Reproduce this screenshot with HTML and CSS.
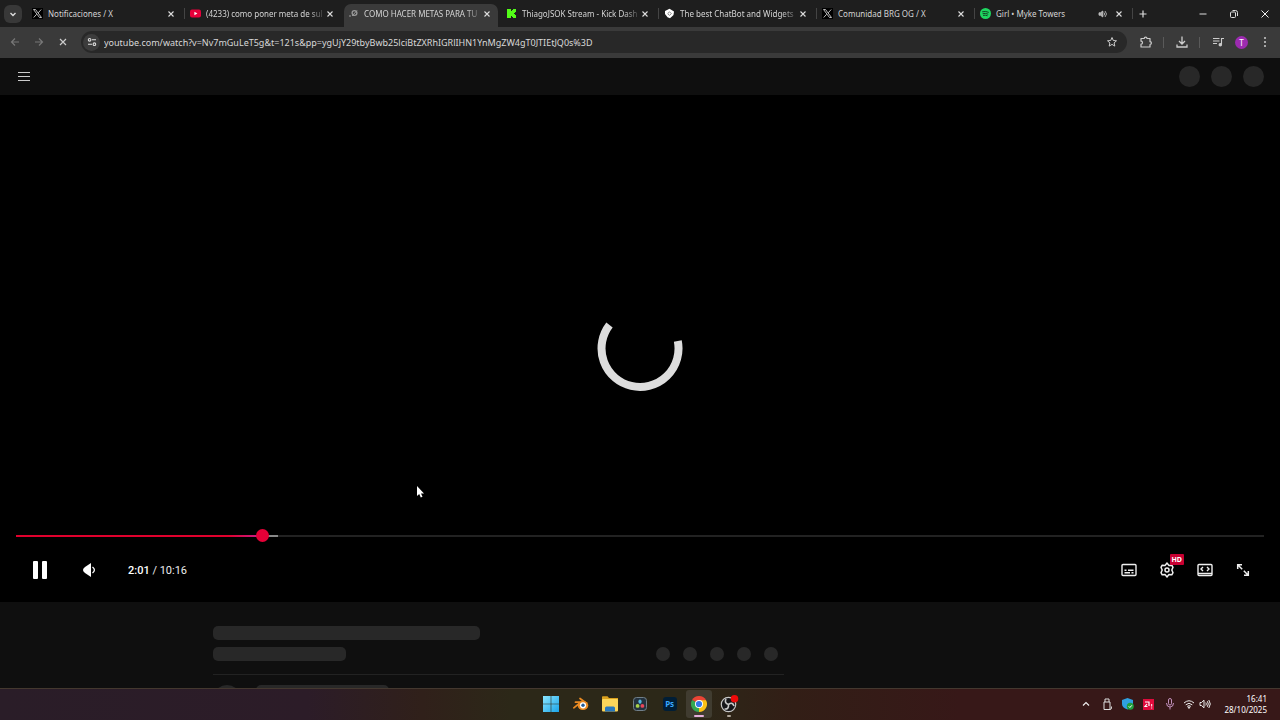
FILE: index.html
```html
<!DOCTYPE html>
<html lang="es">
<head>
    <meta charset="UTF-8">
    <meta name="viewport" content="width=device-width, initial-scale=1.0">
    <title>YouTube</title>
    <link rel="stylesheet" href="styles.css">
</head>
<body>
    <!-- shared icons -->
    <svg class="sprite" aria-hidden="true">
        <symbol id="close" viewBox="0 0 10 10"><path d="M2.5 2.5l5 5M7.5 2.5l-5 5" fill="none" stroke="currentColor" stroke-width="1.1"/></symbol>
        <symbol id="x-logo" viewBox="0 0 11 11"><path d="M0 0h11v11H0z" fill="#000"/><path d="M1.5 1.5h2l6 8h-2zM9.2 1.5L6.2 4.9M4.7 6.2L1.7 9.5" fill="none" stroke="#ccc" stroke-width=".9"/></symbol>
    </svg>

    <header class="browser">
        <div class="tab-strip">
            <button class="tab-search" aria-label="Buscar pestañas">
                <svg width="10" height="10" viewBox="0 0 10 10"><path d="M2.5 4L5 6.5 7.5 4" fill="none" stroke="#ddd" stroke-width="1.4"/></svg>
            </button>
            <nav class="tabs">
                <div class="tab">
                    <svg class="favicon" viewBox="0 0 11 11"><use href="#x-logo"/></svg>
                    <a href="#" class="tab-title">Notificaciones / X</a>
                    <button class="tab-close" aria-label="Cerrar"><svg><use href="#close"/></svg></button>
                </div>
                <div class="tab no-line">
                    <svg class="favicon" viewBox="0 0 11 11"><rect y="1.5" width="11" height="8" rx="2" fill="#e6003a"/><path d="M4.4 3.8v3.4l3-1.7z" fill="#fff"/></svg>
                    <a href="#" class="tab-title fade">(4233) como poner meta de sul</a>
                    <button class="tab-close" aria-label="Cerrar"><svg><use href="#close"/></svg></button>
                </div>
                <div class="tab active no-line">
                    <svg class="favicon" viewBox="0 0 11 11"><g fill="none" stroke="#999"><circle cx="6.5" cy="5" r="2.4" stroke-width="1.3"/><path d="M4 8l5-5.5"/></g><circle cx="2" cy="8" r=".8" fill="#aaa"/></svg>
                    <a href="#" class="tab-title fade">COMO HACER METAS PARA TU</a>
                    <button class="tab-close" aria-label="Cerrar"><svg><use href="#close"/></svg></button>
                </div>
                <div class="tab">
                    <svg class="favicon" viewBox="0 0 11 11"><path d="M1 1h4v2h1V2h1V1h3v3H9v1H8v1h1v1h1v3H7V9H6V8H5v2H1z" fill="#53fc18"/></svg>
                    <a href="#" class="tab-title fade">ThiagoJSOK Stream - Kick Dash</a>
                    <button class="tab-close" aria-label="Cerrar"><svg><use href="#close"/></svg></button>
                </div>
                <div class="tab">
                    <svg class="favicon" viewBox="0 0 11 11"><path d="M5.5 .8L10 3.5 9.5 7 6 10.3 3.5 9.2 1 6V3z" fill="#fff"/><path d="M5.5 3.8l1.8 1.8-1.8 1.8-1.8-1.8z" fill="none" stroke="#555" stroke-width=".7"/></svg>
                    <a href="#" class="tab-title fade">The best ChatBot and Widgets</a>
                    <button class="tab-close" aria-label="Cerrar"><svg><use href="#close"/></svg></button>
                </div>
                <div class="tab">
                    <svg class="favicon" viewBox="0 0 11 11"><use href="#x-logo"/></svg>
                    <a href="#" class="tab-title">Comunidad BRG OG / X</a>
                    <button class="tab-close" aria-label="Cerrar"><svg><use href="#close"/></svg></button>
                </div>
                <div class="tab">
                    <svg class="favicon" viewBox="0 0 11 11"><circle cx="5.5" cy="5.5" r="5.5" fill="#1ed760"/><path d="M2.2 3.8q3.5-1 6.6.6M2.6 5.7q3-.8 5.6.5M3 7.4q2.5-.6 4.6.4" fill="none" stroke="#12351f" stroke-width=".9"/></svg>
                    <a href="#" class="tab-title">Girl • Myke Towers</a>
                    <button class="tab-sound" aria-label="Silenciar">
                        <svg width="10" height="10" viewBox="0 0 10 10" fill="none" stroke="#ccc" stroke-width=".8"><path d="M1 3.8h1.5L4.8 2v6L2.5 6.2H1z" fill="#aaa"/><path d="M6 3.5q1.4 1.5 0 3M7 2q3 3 0 6"/></svg>
                    </button>
                    <button class="tab-close" aria-label="Cerrar"><svg><use href="#close"/></svg></button>
                </div>
            </nav>
            <button class="new-tab" aria-label="Nueva pestaña">
                <svg width="10" height="10" viewBox="0 0 10 10"><path d="M5 1.5v7M1.5 5h7" stroke="#ddd" stroke-width="1.2"/></svg>
            </button>
            <div class="window-buttons">
                <button aria-label="Minimizar"><svg width="10" height="10" viewBox="0 0 10 10"><path d="M1.5 5h7" stroke="#ddd"/></svg></button>
                <button aria-label="Restaurar"><svg width="10" height="10" viewBox="0 0 10 10" fill="none" stroke="#ddd"><rect x="1.5" y="3" width="5" height="5.5" rx="1"/><path d="M3.5 1.5h3q2 0 2 2v3.5"/></svg></button>
                <button aria-label="Cerrar ventana"><svg width="10" height="10" viewBox="0 0 10 10"><path d="M1.5 1.5l7 7M8.5 1.5l-7 7" stroke="#eee"/></svg></button>
            </div>
        </div>

        <div class="toolbar">
            <div class="nav-buttons">
                <button aria-label="Atrás"><svg width="12" height="12" viewBox="0 0 12 12" fill="none" stroke="#777" stroke-width="1.2"><path d="M10 6H2.5M6 2.5L2.5 6 6 9.5"/></svg></button>
                <button aria-label="Adelante"><svg width="12" height="12" viewBox="0 0 12 12" fill="none" stroke="#777" stroke-width="1.2"><path d="M2 6h7.5M6 2.5L9.5 6 6 9.5"/></svg></button>
                <button aria-label="Detener"><svg width="12" height="12" viewBox="0 0 12 12" fill="none" stroke="#ccc" stroke-width="1.2"><path d="M3 3l6 6M9 3L3 9"/></svg></button>
            </div>
            <div class="omnibox">
                <button class="site-info" aria-label="Información del sitio">
                    <svg width="10" height="10" viewBox="0 0 10 10" fill="none" stroke="#ddd" stroke-width="1.1"><circle cx="2.6" cy="2.8" r="1.3"/><path d="M5 2.8h4M1 7.2h4"/><circle cx="7.4" cy="7.2" r="1.3"/></svg>
                </button>
                <input class="url" type="text" aria-label="Dirección" value="youtube.com/watch?v=Nv7mGuLeT5g&amp;t=121s&amp;pp=ygUjY29tbyBwb25lciBtZXRhIGRlIHN1YnMgZW4gT0JTIEtJQ0s%3D">
                <button class="star" aria-label="Favorito">
                    <svg width="12" height="12" viewBox="0 0 12 12"><path d="M6 1.5l1.3 3 3.2.3-2.4 2.1.7 3.2L6 8.4l-2.8 1.7.7-3.2L1.5 4.8l3.2-.3z" fill="none" stroke="#ccc"/></svg>
                </button>
            </div>
            <div class="extensions">
                <button aria-label="Extensiones"><svg width="14" height="14" viewBox="0 0 14 14"><path d="M2 3.5h3.2a1.4 1.4 0 0 1 2.8 0h3v3.2a1.4 1.4 0 0 1 0 2.8V12H2V9.2a1.5 1.5 0 0 0 0-3z" fill="none" stroke="#ccc" stroke-width="1.2" stroke-linejoin="round"/></svg></button>
                <span class="divider"></span>
                <button aria-label="Descargas"><svg width="14" height="14" viewBox="0 0 14 14"><path d="M7 1.5v7M4 6l3 3 3-3M2 9.5V12h10V9.5" fill="none" stroke="#ccc" stroke-width="1.3"/></svg></button>
                <span class="divider"></span>
                <button aria-label="Multimedia"><svg width="14" height="14" viewBox="0 0 14 14" fill="none" stroke="#ccc" stroke-width="1.1"><path d="M2 3.5h6.5M2 6h6.5M2 8.5h4M10.5 9.5v-6H13"/><circle cx="9.3" cy="9.7" r="1.2" fill="#ccc"/></svg></button>
                <button class="profile" aria-label="Perfil">T</button>
                <button class="more" aria-label="Más"><svg width="12" height="12" viewBox="0 0 12 12" fill="#ccc"><circle cx="6" cy="2" r="1"/><circle cx="6" cy="6" r="1"/><circle cx="6" cy="10" r="1"/></svg></button>
            </div>
        </div>
    </header>

    <main class="page">
        <div class="masthead">
            <button aria-label="Menú"><svg width="12" height="10" viewBox="0 0 12 10"><path d="M0 .5h12M0 4.5h12M0 8.5h12" stroke="#ccc"/></svg></button>
            <div class="masthead-dots"><span></span><span></span><span></span></div>
        </div>

        <section class="player">
            <svg class="spinner" width="86" height="86" viewBox="0 0 86 86"><path d="M12.5 19A38.5 38.5 0 1 0 80.8 35" fill="none" stroke="#ddd" stroke-width="8"/></svg>
            <svg class="cursor" width="10" height="14" viewBox="0 0 10 14"><path d="M1 1v10l2.2-2 1.6 3.6 1.7-.8L5 8.500h3z" fill="#fff"/></svg>

            <input class="seek" type="range" min="0" max="1000" value="194" aria-label="Progreso">
            <div class="controls">
                <button class="pause" aria-label="Pausa"><svg width="16" height="18" viewBox="0 0 16 18" fill="#fff"><rect x="1" width="5" height="18" rx="1"/><rect x="10" width="5" height="18" rx="1"/></svg></button>
                <button class="volume" aria-label="Volumen"><svg width="14" height="14" viewBox="0 0 14 14"><path d="M8 0v14L2 10Q0 8.500 0 7t2-3z" fill="#fff"/><path d="M9.5 4q3.8 3 0 6" fill="none" stroke="#fff" stroke-width="1.3"/></svg></button>
                <span class="time"><b>2:01</b> / 10:16</span>
                <div class="controls-right">
                    <button aria-label="Subtítulos"><svg width="16" height="14" viewBox="0 0 16 14" fill="none" stroke="#eee" stroke-width="1.4"><rect x="1" y="1.5" width="14" height="11" rx="1"/><path d="M3.5 7.2h2M7 7.2h5.5M3.5 9.8H9M10.500 9.8h2"/></svg></button>
                    <button class="settings" aria-label="Configuración">
                        <svg width="16" height="16" viewBox="0 0 16 16" fill="none" stroke="#eee" stroke-width="1.5" stroke-linejoin="round"><path d="M8 1l1.8 2.400 3-.2 1.200 2.100L12.800 8l1.200 2.700-1.200 2.100-3-.2L8 15l-1.800-2.400-3 .2L2 10.700 3.200 8 2 5.300l1.200-2.100 3 .2z"/><circle cx="8" cy="8" r="2"/></svg>
                        <span class="hd">HD</span>
                    </button>
                    <button aria-label="Modo cine"><svg width="16" height="14" viewBox="0 0 16 14" fill="none" stroke="#eee" stroke-width="1.4"><rect x="1" y="1.5" width="14" height="11" rx="1"/><path d="M1 10.5h14M6 4L4 6l2 2M10 4l2 2-2 2"/></svg></button>
                    <button aria-label="Pantalla completa"><svg width="14" height="14" viewBox="0 0 14 14" fill="none" stroke="#eee" stroke-width="1.5"><path d="M1.7 6V1.700H6M2 2l4.200 4.200M12.300 8v4.300H8M12 12L7.800 7.800"/></svg></button>
                </div>
            </div>
        </section>

        <section class="details">
            <div class="skeleton title"></div>
            <div class="meta">
                <div class="skeleton views"></div>
                <div class="actions"><span></span><span></span><span></span><span></span><span></span></div>
            </div>
            <div class="owner">
                <span class="avatar"></span>
                <div class="skeleton channel"></div>
            </div>
        </section>
    </main>

    <footer class="taskbar">
        <div class="apps">
            <button aria-label="Inicio"><svg width="16" height="16" viewBox="0 0 16 16"><defs><linearGradient id="win" x2="1" y2="1"><stop stop-color="#8be6ff"/><stop offset="1" stop-color="#1aa4e8"/></linearGradient></defs><path d="M0 0h7.7v7.7H0zM8.3 0H16v7.7H8.3zM0 8.3h7.7V16H0zM8.3 8.3H16V16H8.3z" fill="url(#win)"/></svg></button>
            <button aria-label="Blender"><svg width="16" height="16" viewBox="0 0 16 16"><path d="M7 2.5l6.5 4.8M2.5 6.2h8M.8 11.8L7.5 6.5" fill="none" stroke="#ea8a22" stroke-width="1.7" stroke-linecap="round"/><ellipse cx="10" cy="9.5" rx="5.3" ry="4.6" fill="#ea8a22"/><circle cx="10" cy="9.3" r="3.1" fill="#fff"/><circle cx="10" cy="9.3" r="1.7" fill="#245b96"/></svg></button>
            <button aria-label="Explorador"><svg width="18" height="16" viewBox="0 0 18 16"><path d="M1 1q0-.8.8-.8h4.700L8 2h9v5H1z" fill="#d9a01e"/><rect x="1" y="3" width="16" height="12.500" rx="1" fill="#fbd55a"/><path d="M4 15.5V12q0-1.500 1.500-1.500h7Q14 10.500 14 12v3.500z" fill="#2878bd"/></svg></button>
            <button aria-label="DaVinci Resolve"><svg width="14" height="14" viewBox="0 0 14 14"><rect x=".5" y=".5" width="13" height="13" rx="3" fill="#24323f" stroke="#71808a"/><ellipse cx="7" cy="4.6" rx="1.6" ry="2.2" fill="#55b9e0"/><circle cx="4.6" cy="8.9" r="1.9" fill="#a9d34a"/><circle cx="9.4" cy="8.9" r="1.9" fill="#e8475a"/></svg></button>
            <button aria-label="Photoshop"><span class="ps">Ps</span></button>
            <button class="open current" aria-label="Chrome"><svg width="16" height="16" viewBox="0 0 16 16"><path d="M8 8L1.07 4A8 8 0 0 1 14.930 4z" fill="#e94435"/><path d="M8 8L14.930 4A8 8 0 0 1 8 16z" fill="#fbc116"/><path d="M8 8v8A8 8 0 0 1 1.070 4z" fill="#34a853"/><path d="M8 4.2h6.950L11.300 9.900 8 16z" fill="#fbc116"/><circle cx="8" cy="8" r="4" fill="#fff"/><circle cx="8" cy="8" r="3.1" fill="#3478e8"/></svg></button>
            <button class="open" aria-label="OBS"><svg width="20" height="18" viewBox="0 0 20 18"><circle cx="9.500" cy="9.5" r="7.2" fill="#16161a" stroke="#c8c8c8" stroke-width="1.2"/><path d="M9.500 9.5Q5 8 7 4M9.500 9.5q4-3 5.500 1.500M9.500 9.5q.5 5-4 4.500" fill="none" stroke="#c8c8c8" stroke-width="1.6"/><circle cx="15.5" cy="3.8" r="3.8" fill="#f00a0a"/></svg></button>
        </div>
        <div class="tray">
            <button aria-label="Iconos ocultos"><svg width="10" height="10" viewBox="0 0 10 10"><path d="M2 6.5l3-3 3 3" fill="none" stroke="#eee" stroke-width="1.2"/></svg></button>
            <button aria-label="USB"><svg width="10" height="14" viewBox="0 0 10 14" fill="none" stroke="#ddd"><path d="M3 5V2h4v3M2 5h6v7.5H2zM8 12.5q2 0 1.500-3"/></svg></button>
            <button aria-label="Seguridad"><svg width="12" height="12" viewBox="0 0 12 12"><path d="M5.5 0L11 2v4q0 3.5-5.5 5.5Q0 9.5 0 6V2z" fill="#2fa0e0"/><circle cx="8.3" cy="8.3" r="3.5" fill="#1e9e3c"/><path d="M6.7 8.3l1.2 1.2 2-2.2" fill="none" stroke="#fff"/></svg></button>
            <button aria-label="AMD"><svg width="11" height="11" viewBox="0 0 11 11"><path d="M0 0h11v11H0z" fill="#e00b3c"/><path d="M2 3h4v4M4 5L2 7.5h2.5" fill="none" stroke="#fff" stroke-width="1.2"/><path d="M8.7 5v2.5M8.7 8.5v1" stroke="#fff"/></svg></button>
            <button aria-label="Micrófono"><svg width="10" height="12" viewBox="0 0 10 12" fill="none" stroke="#c391bd"><rect x="3.5" y=".5" width="3" height="6.5" rx="1.5"/><path d="M1.5 5q0 4 3.5 4t3.5-4M5 9v2.5"/></svg></button>
            <button class="network" aria-label="Red y sonido">
                <svg width="12" height="10" viewBox="0 0 12 10" fill="none" stroke="#eee"><path d="M1 4q5-4.5 10 0M2.7 5.8q3.3-3 6.6 0M4.2 7.4q1.8-1.5 3.6 0"/><circle cx="6" cy="8.6" r=".7" fill="#eee"/></svg>
                <svg width="12" height="10" viewBox="0 0 12 10" fill="none" stroke="#eee"><path d="M1 3.5h1.5L5 1.2v7.6L2.5 6.5H1zM6.8 3.5q1 1.5 0 3M8.3 2.2q2 2.8 0 5.6M9.8 1q3 4 0 8"/></svg>
            </button>
            <div class="clock"><time>16:41</time><time>28/10/2025</time></div>
        </div>
    </footer>
</body>
</html>
```
FILE: styles.css
```css
* {
    box-sizing: border-box;
}
body {
    margin: 0;
    height: 100vh;
    display: flex;
    flex-direction: column;
    overflow: hidden;
    background-color: #0f0f0f;
    color: #ddd;
    font-family: "Noto Sans", "Open Sans", sans-serif;
    font-size: 8px;
}
button {
    display: flex;
    align-items: center;
    justify-content: center;
    flex-shrink: 0;
    padding: 0;
    border: none;
    background: none;
    color: inherit;
    font-family: inherit;
}
.sprite {
    display: none;
}

/* Browser tabs */
.tab-strip {
    display: flex;
    align-items: center;
    height: 27px;
    background-color: #1e1e1e;
}
.tab-search {
    width: 18px;
    height: 18px;
    margin: 0 4px;
    border-radius: 6px;
    background-color: #383838;
}
.tabs {
    display: flex;
    flex: 0 1 1106px;
    height: 27px;
    min-width: 0;
}
.tab {
    position: relative;
    display: flex;
    align-items: center;
    flex: 1 1 0;
    min-width: 0;
    margin: 4px 2px 0;
    padding: 0 6px 4px 4px;
}
.tab::after {
    content: "";
    position: absolute;
    right: -3px;
    top: 4px;
    width: 1px;
    height: 11px;
    background-color: #444;
}
.tab.no-line::after {
    background-color: transparent;
}
.tab:first-child::after {
    background-color: #444;
}
.tab.active {
    border-radius: 7px 7px 0 0;
    background-color: #3a3a3a;
}
.favicon {
    flex: 0 0 11px;
    height: 11px;
    margin-right: 5px;
}
.tab-title {
    flex: 1;
    white-space: nowrap;
    color: #d4d4d4;
    text-decoration: none;
}
.fade {
    mask-image: linear-gradient(to right, #000 88%, rgba(0, 0, 0, 0.2));
}
.tab-close {
    width: 10px;
    height: 10px;
    margin-left: 2px;
}
.tab-sound {
    margin-right: 4px;
}
.tab-close svg {
    width: 10px;
    height: 10px;
}
.new-tab {
    width: 18px;
    height: 18px;
    margin-left: 2px;
}
.window-buttons {
    display: flex;
    margin-left: auto;
}
.window-buttons button {
    width: 31px;
    height: 27px;
}

/* Toolbar */
.toolbar {
    display: flex;
    align-items: center;
    height: 31px;
    padding-bottom: 1px;
    background-color: #3a3a3a;
}
.nav-buttons {
    display: flex;
    padding: 0 6px 0 3px;
}
.nav-buttons button {
    width: 24px;
    height: 24px;
}
.omnibox {
    display: flex;
    align-items: center;
    flex: 1;
    height: 22px;
    padding: 0 9px 0 2px;
    border-radius: 11px;
    background-color: #282828;
}
.site-info {
    width: 17px;
    height: 17px;
    border-radius: 50%;
    background-color: #3c3c3c;
}
.url {
    flex: 1;
    min-width: 0;
    padding: 0 4px;
    border: none;
    outline: none;
    background: none;
    color: #d8d8d8;
    font-family: inherit;
    font-size: 9px;
}
.extensions {
    display: flex;
    align-items: center;
    padding: 0 9px 0 12px;
}
.divider {
    width: 1px;
    height: 11px;
    margin: 0 11px 0 10px;
    background-color: #5a5a5a;
}
.profile {
    width: 13px;
    height: 13px;
    margin: 0 11px 0 10px;
    border-radius: 50%;
    background-color: #9c2bb0;
    color: #fff;
    font-size: 8px;
}

/* YouTube header */
.page {
    display: flex;
    flex-direction: column;
    flex: 1;
    min-height: 0;
}
.masthead {
    display: flex;
    align-items: center;
    justify-content: space-between;
    height: 37px;
    padding: 0 16px 0 18px;
}
.masthead-dots {
    display: flex;
    gap: 11px;
}
.masthead-dots span {
    width: 21px;
    height: 21px;
    border-radius: 50%;
    background-color: #282828;
}

/* Player */
.player {
    position: relative;
    display: flex;
    flex-direction: column;
    justify-content: flex-end;
    flex: 1;
    padding: 0 16px;
    background-color: #000;
}
.spinner {
    position: absolute;
    top: 50%;
    left: 50%;
    transform: translate(-50%, -50%);
}
.cursor {
    position: absolute;
    left: 416px;
    top: 390px;
}
.seek {
    appearance: none;
    width: 100%;
    height: 14px;
    margin: 0;
    background: none;
}
.seek::-webkit-slider-runnable-track {
    height: 2px;
    background: linear-gradient(to right, #e1002d 0, #e1002d 17%, #c81e8c 19.6%, #888 19.6%, #888 21%, #222 21%);
}
.seek::-webkit-slider-thumb {
    appearance: none;
    width: 13px;
    height: 13px;
    margin-top: -6px;
    border-radius: 50%;
    background-color: #e60037;
}
.controls {
    display: flex;
    align-items: center;
    height: 59px;
    padding-bottom: 5px;
}
.pause {
    width: 48px;
    height: 36px;
}
.volume {
    width: 52px;
    height: 36px;
}
.time {
    margin-left: 12px;
    color: #eee;
    font-family: Roboto, sans-serif;
    font-size: 11px;
}
.time b {
    font-weight: 500;
    color: #fff;
}
.controls-right {
    display: flex;
    margin-left: auto;
    margin-right: 2px;
}
.controls-right button {
    width: 38px;
    height: 36px;
}
.settings {
    position: relative;
}
.hd {
    position: absolute;
    top: 2px;
    right: 2px;
    padding: 0 2px;
    border-radius: 1px;
    background-color: #c80032;
    color: #fff;
    font-size: 7px;
    font-weight: bold;
    line-height: 11px;
}

/* Loading placeholders */
.details {
    width: 571px;
    height: 86px;
    margin-left: calc(100% / 6);
    padding-top: 24px;
    overflow: hidden;
}
.skeleton {
    height: 14px;
    border-radius: 5px;
    background-color: #282828;
}
.title {
    width: 267px;
}
.meta {
    display: flex;
    justify-content: space-between;
    padding: 7px 6px 13px 0;
    border-bottom: 1px solid #222;
}
.views, .channel {
    width: 133px;
}
.actions {
    display: flex;
    gap: 13px;
}
.actions span {
    width: 14px;
    height: 14px;
    border-radius: 50%;
    background-color: #282828;
}
.owner {
    display: flex;
    gap: 15px;
    padding-top: 10px;
}
.avatar {
    width: 28px;
    height: 28px;
    border-radius: 50%;
    background-color: #282828;
}

/* Windows taskbar */
.taskbar {
    display: grid;
    grid-template-columns: 1fr auto 1fr;
    align-items: center;
    height: 32px;
    padding-bottom: 1px;
    border-top: 1px solid #44382f;
    background: linear-gradient(to right, #2a1d28 0, #2c1c28 24%, #30201a 33%, #2c2818 40%, #2c2818 54%, #321e16 62%, #371818 75%, #371818 100%);
}
.apps {
    display: flex;
    justify-content: space-between;
    grid-column: 2;
    width: 204px;
}
.apps button {
    position: relative;
    width: 26px;
    height: 28px;
    border-radius: 3px;
}
.apps .current {
    background-color: #403c30;
}
.open::after {
    content: "";
    position: absolute;
    bottom: 1px;
    width: 4px;
    height: 2px;
    border-radius: 1px;
    background-color: #b0a79c;
}
.current::after {
    width: 10px;
    background-color: #e6b0dc;
}
.ps {
    width: 14px;
    border-radius: 3px;
    background-color: #001e36;
    color: #38a9ff;
    font-size: 8px;
    font-weight: bold;
    line-height: 14px;
}
.tray {
    display: flex;
    align-items: center;
    justify-content: flex-end;
    padding-right: 13px;
}
.tray button {
    width: 21px;
    height: 28px;
}
.tray .network {
    gap: 4px;
    width: 34px;
}
.clock {
    display: flex;
    flex-direction: column;
    margin-left: 10px;
    color: #fff;
    line-height: 11px;
    text-align: right;
}
```
